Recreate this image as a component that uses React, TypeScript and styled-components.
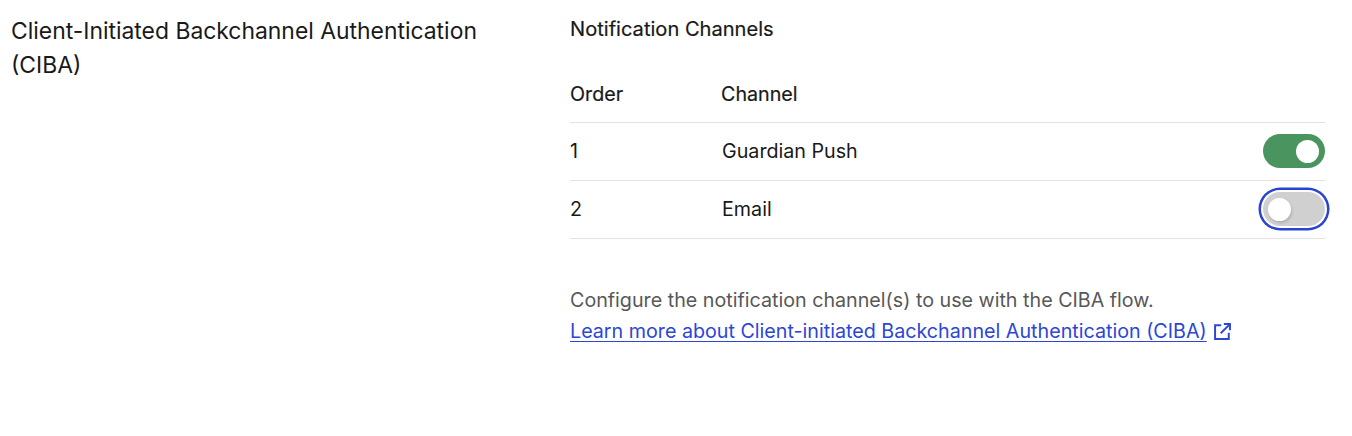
import React from "react";
import styled, { createGlobalStyle } from "styled-components";

const Global = createGlobalStyle`
  html, body { margin: 0; padding: 0; background: #fff; }
  body { font-family: Inter, "Liberation Sans", sans-serif; color: #191919; }
`;

const Page = styled.main`
  width: 1352px;
  height: 436px;
  display: grid;
  grid-template-columns: 570px 755px;
  overflow: hidden;
`;

const SectionTitle = styled.h2`
  margin: 0;
  padding: 15px 0 0 11px;
  width: 490px;
  font-size: 22.9px;
  line-height: 33.5px;
  font-weight: 400;
  color: #191919;
`;

const Content = styled.section`
  display: flex;
  flex-direction: column;
  padding-top: 17px;
`;

const Heading = styled.h3`
  margin: 0 0 27.5px;
  font-size: 20.1px;
  line-height: 24px;
  font-weight: 400;
  -webkit-text-stroke: 0.2px #191919;
`;

const Row = styled.div`
  display: grid;
  grid-template-columns: 151px 1fr auto;
  align-items: center;
  height: 57px;
  border-bottom: 1px solid #e2e2e2;
  font-size: 19.7px;
  font-weight: 400;
`;

const HeadRow = styled(Row)`
  height: 51px;
  padding-bottom: 2px;
  -webkit-text-stroke: 0.2px #191919;
`;

const ChannelName = styled.span`
  padding-left: 1px;
`;

const Toggle = styled.span<{ $on?: boolean; $focused?: boolean }>`
  position: relative;
  display: block;
  width: 62px;
  height: 34px;
  border-radius: 17px;
  background: ${(p) => (p.$on ? "#4a9460" : "#d0d0d0")};
  ${(p) => p.$focused && "box-shadow: 0 0 0 2px #fff, 0 0 0 4.5px #2b43d3;"}
  &::after {
    content: "";
    position: absolute;
    top: 6px;
    left: ${(p) => (p.$on ? "33px" : "5px")};
    width: 23px;
    height: 23px;
    border-radius: 50%;
    background: #fff;
    box-shadow: ${(p) => (p.$on ? "none" : "1px 2px 3px rgba(0, 0, 0, 0.15)")};
  }
`;

const Help = styled.p`
  margin: 46.5px 0 0;
  font-size: 19.7px;
  line-height: 31px;
  color: #585858;
`;

const DocLink = styled.a`
  display: inline-flex;
  align-items: center;
  gap: 7px;
  color: #2c46d6;
  text-decoration: none;
`;

const LinkText = styled.span`
  text-decoration: underline;
  text-underline-offset: 3px;
`;

const ExternalIcon = () => (
  <svg width="17" height="17" viewBox="3 2 19 19" fill="none" stroke="currentColor" strokeWidth="2.2">
    <path d="M11 4.5H4.2v15.3h15.3V13" />
    <path d="M14 3.2h6.8V10" />
    <path d="M20.8 3.2 10.5 13.5" />
  </svg>
);

export default function App() {
  return (
    <Page>
      <Global />
      <SectionTitle>Client-Initiated Backchannel Authentication (CIBA)</SectionTitle>
      <Content>
        <Heading>Notification Channels</Heading>
        <HeadRow>
          <span>Order</span>
          <span>Channel</span>
          <span />
        </HeadRow>
        <Row>
          <span>1</span>
          <ChannelName>Guardian Push</ChannelName>
          <Toggle $on />
        </Row>
        <Row>
          <span>2</span>
          <ChannelName>Email</ChannelName>
          <Toggle $focused />
        </Row>
        <Help>
          Configure the notification channel(s) to use with the CIBA flow.
          <br />
          <DocLink href="#">
            <LinkText>Learn more about Client-initiated Backchannel Authentication (CIBA)</LinkText>
            <ExternalIcon />
          </DocLink>
        </Help>
      </Content>
    </Page>
  );
}
